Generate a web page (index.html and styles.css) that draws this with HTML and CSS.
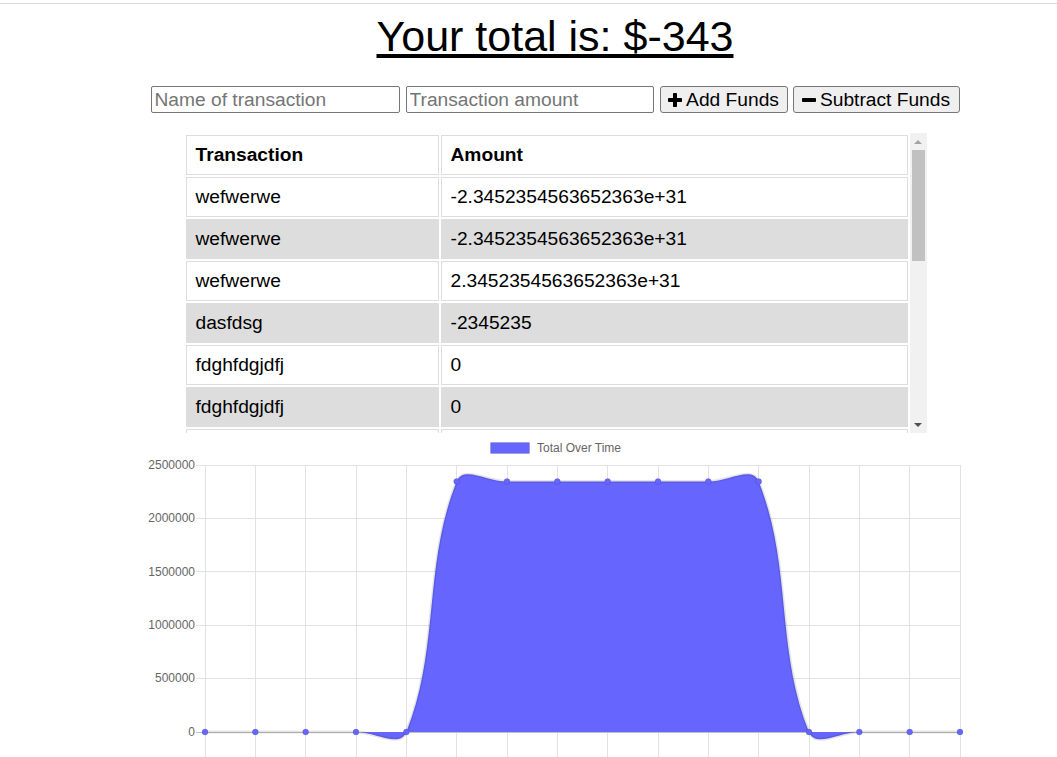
FILE: index.html
```html
<!DOCTYPE html>
<html lang="en">
<head>
<meta charset="utf-8">
<title>Budget Tracker</title>
<link rel="stylesheet" href="styles.css">
</head>
<body>
<div class="topline"></div>
<main class="page">
  <h1 class="total">Your total is: $-343</h1>

  <div class="form">
    <input class="field field-name" type="text" placeholder="Name of transaction">
    <input class="field field-amount" type="text" placeholder="Transaction amount">
    <button class="btn btn-add" type="button">
      <svg class="icon" width="14" height="14" viewBox="0 0 14 14"><rect x="5" y="0" width="4" height="14" rx="0.8"/><rect x="0" y="5" width="14" height="4" rx="0.8"/></svg>
      <span>Add Funds</span>
    </button>
    <button class="btn btn-sub" type="button">
      <svg class="icon" width="14" height="14" viewBox="0 0 14 14"><rect x="0" y="5" width="14" height="4" rx="0.8"/></svg>
      <span>Subtract Funds</span>
    </button>
  </div>

  <div class="table-wrap">
    <div class="table-viewport">
      <table class="tx-table">
        <colgroup><col class="col-name"><col class="col-amount"></colgroup>
        <thead>
          <tr><th>Transaction</th><th>Amount</th></tr>
        </thead>
        <tbody>
          <tr><td>wefwerwe</td><td>-2.3452354563652363e+31</td></tr>
          <tr><td>wefwerwe</td><td>-2.3452354563652363e+31</td></tr>
          <tr><td>wefwerwe</td><td>2.3452354563652363e+31</td></tr>
          <tr><td>dasfdsg</td><td>-2345235</td></tr>
          <tr><td>fdghfdgjdfj</td><td>0</td></tr>
          <tr><td>fdghfdgjdfj</td><td>0</td></tr>
          <tr><td>dasfdsg</td><td>2345235</td></tr>
        </tbody>
      </table>
    </div>
    <div class="scrollbar">
      <div class="sb-btn"><svg width="8" height="4" viewBox="0 0 8 4"><polygon points="0,4 4,0 8,4" fill="#a3a3a3"/></svg></div>
      <div class="sb-thumb"></div>
      <div class="sb-space"></div>
      <div class="sb-btn"><svg width="8" height="4" viewBox="0 0 8 4"><polygon points="0,0 8,0 4,4" fill="#505050"/></svg></div>
    </div>
  </div>

  <div class="chart">
    <svg width="820" height="330" viewBox="145 435 820 330">
      <g class="legend">
        <rect x="490.5" y="442.5" width="39" height="11" fill="#6666ff" stroke="rgba(0,0,0,0.1)" stroke-width="1"/>
        <text x="537" y="452" class="lbl">Total Over Time</text>
      </g>
      <path class="grid" d="M205.5 465V765 M255.5 465V765 M305.5 465V765 M356.5 465V765 M406.5 465V765 M456.5 465V765 M507.5 465V765 M557.5 465V765 M607.5 465V765 M658.5 465V765 M708.5 465V765 M758.5 465V765 M809.5 465V765 M859.5 465V765 M909.5 465V765 M960.5 465V765 M196 465.5H961 M196 518.5H961 M196 571.5H961 M196 625.5H961 M196 678.5H961"/>
      <path class="zero" d="M196 732.5H961"/>
      <g class="lbl" text-anchor="end">
        <text x="195" y="469">2500000</text>
        <text x="195" y="522">2000000</text>
        <text x="195" y="576">1500000</text>
        <text x="195" y="629">1000000</text>
        <text x="195" y="682">500000</text>
        <text x="195" y="736">0</text>
      </g>
      <path class="area" d="M205,732 L356,732 C376.13,732 399.7,748.5 406.33,732 C439.97,648.3 423.03,565.2 456.67,481.5 C463.3,465 486.87,481.5 507,481.5 L708.33,481.5 C728.47,481.5 752.04,465 758.67,481.5 C792.31,565.2 775.36,648.3 809,732 C815.63,748.5 839.2,732 859.33,732 L960,732 Z"/>
      <path class="line" d="M205,732 L356,732 C376.13,732 399.7,748.5 406.33,732 C439.97,648.3 423.03,565.2 456.67,481.5 C463.3,465 486.87,481.5 507,481.5 L708.33,481.5 C728.47,481.5 752.04,465 758.67,481.5 C792.31,565.2 775.36,648.3 809,732 C815.63,748.5 839.2,732 859.33,732 L960,732"/>
      <g class="pts">
        <circle cx="205" cy="732" r="3"/>
        <circle cx="255.33" cy="732" r="3"/>
        <circle cx="305.67" cy="732" r="3"/>
        <circle cx="356" cy="732" r="3"/>
        <circle cx="406.33" cy="732" r="3"/>
        <circle cx="456.67" cy="481.5" r="3"/>
        <circle cx="507" cy="481.5" r="3"/>
        <circle cx="557.33" cy="481.5" r="3"/>
        <circle cx="607.67" cy="481.5" r="3"/>
        <circle cx="658" cy="481.5" r="3"/>
        <circle cx="708.33" cy="481.5" r="3"/>
        <circle cx="758.67" cy="481.5" r="3"/>
        <circle cx="809" cy="732" r="3"/>
        <circle cx="859.33" cy="732" r="3"/>
        <circle cx="909.67" cy="732" r="3"/>
        <circle cx="960" cy="732" r="3"/>
      </g>
    </svg>
  </div>
</main>
</body>
</html>
```

FILE: styles.css
```css
html, body {
  margin: 0;
  padding: 0;
  background: #ffffff;
  overflow: hidden;
}

body {
  font-family: "Liberation Sans", Arial, sans-serif;
  color: #000000;
}

.topline {
  margin-top: 3px;
  border-top: 1px solid #dadada;
}

.page {
  padding-left: 53px;
  display: flex;
  flex-direction: column;
  align-items: center;
}

.total {
  margin: 8px 0 0;
  font-size: 43px;
  font-weight: normal;
  line-height: 48px;
  text-decoration: underline;
}

.form {
  display: flex;
  gap: 6px;
  margin-top: 26px;
}

.field {
  box-sizing: border-box;
  height: 27px;
  border: 1px solid #767676;
  border-radius: 2px;
  padding: 1px 3px;
  font-family: "Liberation Sans", Arial, sans-serif;
  font-size: 19.2px;
  color: #000;
  background: #fff;
}

.field::placeholder {
  color: #757575;
}

.field-name {
  width: 249px;
}

.field-amount {
  width: 248px;
}

.btn {
  box-sizing: border-box;
  height: 27px;
  display: flex;
  align-items: center;
  justify-content: center;
  gap: 4px;
  padding: 0;
  background: #efefef;
  border: 1px solid #767676;
  border-radius: 3px;
  font-family: "Liberation Sans", Arial, sans-serif;
  font-size: 19.2px;
  color: #000;
}

.btn-add {
  width: 128px;
}

.btn-sub {
  width: 167px;
  margin-left: -1px;
}

.icon {
  display: block;
  fill: #000;
}

.table-wrap {
  display: flex;
  width: 743px;
  margin-top: 20px;
}

.table-viewport {
  width: 726px;
  height: 300px;
  overflow: hidden;
}

.tx-table {
  width: 726px;
  table-layout: fixed;
  border-collapse: separate;
  border-spacing: 2px;
  font-size: 19.2px;
}

.col-name {
  width: 253px;
}

.tx-table th,
.tx-table td {
  border: 1px solid #dddddd;
  padding: 8px 8px 8px 9px;
  line-height: 22px;
  text-align: left;
  white-space: nowrap;
}

.tx-table th {
  font-weight: bold;
}

.tx-table tbody tr:nth-child(even) td {
  background: #dddddd;
}

.scrollbar {
  width: 17px;
  height: 300px;
  background: #f1f1f1;
  display: flex;
  flex-direction: column;
}

.sb-btn {
  height: 17px;
  display: flex;
  align-items: center;
  justify-content: center;
}

.sb-btn svg {
  display: block;
}

.sb-thumb {
  height: 111px;
  margin: 0 2px;
  background: #c1c1c1;
}

.sb-space {
  flex: 1;
}

.chart {
  margin-top: 2px;
}

.chart svg {
  display: block;
}

.lbl {
  font-family: "Liberation Sans", Arial, sans-serif;
  font-size: 12px;
  fill: #666666;
}

.grid {
  fill: none;
  stroke: #e2e2e2;
  stroke-width: 1;
}

.zero {
  fill: none;
  stroke: #c0c0c0;
  stroke-width: 1;
}

.area {
  fill: #6666ff;
  stroke: none;
}

.line {
  fill: none;
  stroke: rgba(0, 0, 0, 0.1);
  stroke-width: 3;
}

.pts circle {
  fill: #6666ff;
  stroke: rgba(0, 0, 0, 0.1);
  stroke-width: 1;
}
```
